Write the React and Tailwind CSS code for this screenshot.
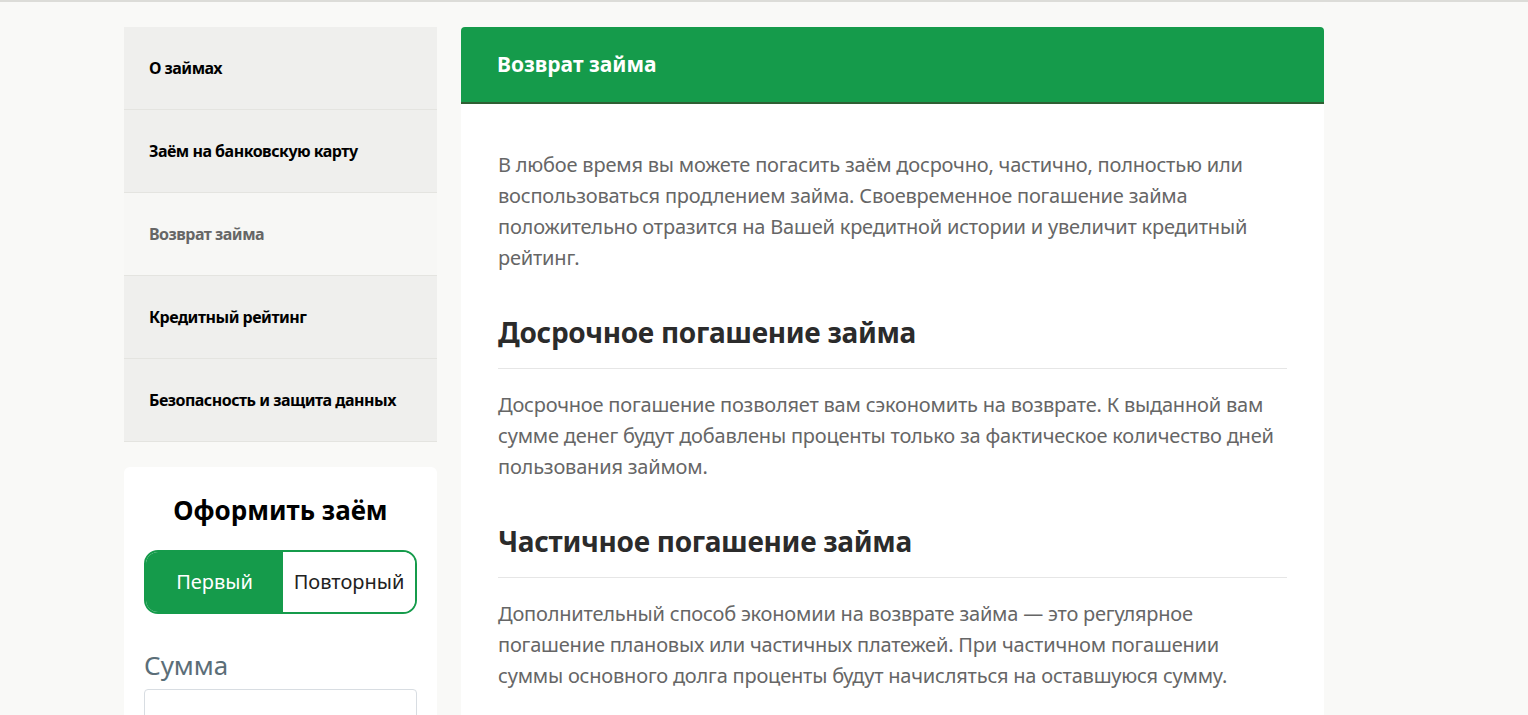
export default function App() {
  const items = ["О займах", "Заём на банковскую карту", "Возврат займа", "Кредитный рейтинг", "Безопасность и защита данных"];
  const f = { fontFamily: '"Noto Sans", "Open Sans", sans-serif' };
  return (
    <div style={f} className="h-[715px] overflow-hidden bg-[#f9f9f7] border-t-2 border-[#dcdcd8]">
      <div className="flex gap-6 pl-[124px] pt-[25px]">
        <div className="w-[313px] shrink-0 flex flex-col">
          <div className="flex flex-col">
            {items.map((t, i) => (
              <div key={t} className={`h-[83px] flex items-center px-[25px] text-[16px] font-bold tracking-[-0.5px] whitespace-nowrap border-b border-[#e4e4e0] ${i === 2 ? "bg-[#f7f7f5] text-[#666]" : "bg-[#efefed] text-black"}`}>{t}</div>
            ))}
          </div>
          <div className="mt-[25px] bg-white rounded-md px-5 pt-6 h-[300px]">
            <div className="text-center text-[26px] font-bold text-black">Оформить заём</div>
            <div className="mt-5 flex h-[64px] rounded-[14px] border-2 border-[#159b4b] overflow-hidden text-[20px]">
              <div className="w-[137px] bg-[#159b4b] text-white flex items-center justify-center">Первый</div>
              <div className="flex-1 bg-white text-[#222] flex items-center justify-center">Повторный</div>
            </div>
            <div className="mt-8 text-[26px] text-[#5b6e78]">Сумма</div>
            <div className="mt-1 h-[50px] border border-[#d8dde2] rounded px-5 pt-4 text-[24px] text-[#333]">15000</div>
          </div>
        </div>
        <div className="w-[863px] shrink-0 self-start">
          <div className="h-[77px] bg-[#159b4b] rounded-t border-b-2 border-[#2f5f33] flex items-center px-9 text-white text-[21px] font-bold">Возврат займа</div>
          <div className="bg-white px-[37px] pt-[45px] pb-10 text-[20px] leading-[31px] text-[#666] tracking-[-0.2px]">
            <p>В любое время вы можете погасить заём досрочно, частично, полностью или воспользоваться продлением займа. Своевременное погашение займа положительно отразится на Вашей кредитной истории и увеличит кредитный рейтинг.</p>
            <h2 className="mt-[44px] text-[28px] font-bold text-[#2b2b2b] pb-5 border-b border-[#e6e6e6] tracking-[-0.3px]">Досрочное погашение займа</h2>
            <p className="mt-[20px]">Досрочное погашение позволяет вам сэкономить на возврате. К выданной вам сумме денег будут добавлены проценты только за фактическое количество дней пользования займом.</p>
            <h2 className="mt-[44px] text-[28px] font-bold text-[#2b2b2b] pb-5 border-b border-[#e6e6e6] tracking-[-0.3px]">Частичное погашение займа</h2>
            <p className="mt-[20px]">Дополнительный способ экономии на возврате займа — это регулярное погашение плановых или частичных платежей. При частичном погашении суммы основного долга проценты будут начисляться на оставшуюся сумму.</p>
          </div>
        </div>
      </div>
    </div>
  );
}
